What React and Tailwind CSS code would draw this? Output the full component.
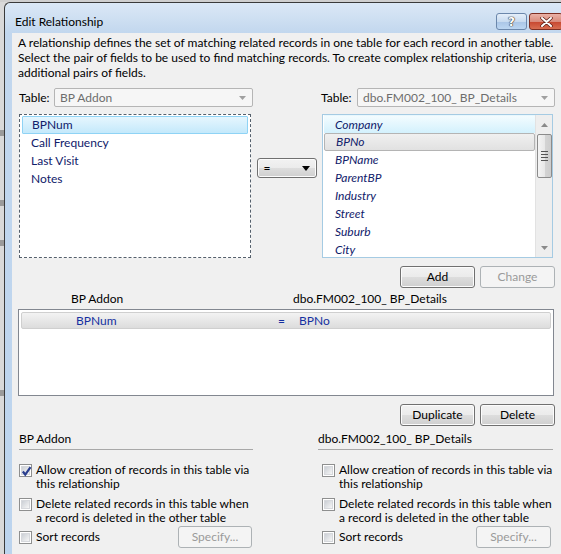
import React from "react";

function Btn({ children, disabled, className = "" }) {
  return (
    <div
      className={
        "flex items-center justify-center rounded-[3px] border text-[12px] " +
        (disabled
          ? "border-[#adb2b5] bg-[#f4f4f4] text-[#9a9a9a] "
          : "border-[#707070] bg-[linear-gradient(to_bottom,#f2f2f2_0%,#ebebeb_50%,#dddddd_51%,#cfcfcf_100%)] text-black shadow-[inset_0_0_0_1px_#fcfcfc] ") +
        className
      }
    >
      {children}
    </div>
  );
}

function Check({ checked }) {
  return (
    <div className="w-[13px] h-[13px] border border-[#8e8f8f] bg-white p-px shrink-0">
      <div className="w-full h-full border border-[#d6d8dc] bg-[linear-gradient(135deg,#cbcfd5_0%,#f6f6f6_100%)] relative">
        {checked && (
          <svg viewBox="0 0 9 9" className="absolute -left-px -top-px w-[11px] h-[11px]">
            <path d="M1.5 4.5 L3.5 7 L7.8 1" fill="none" stroke="#2a3f8f" strokeWidth="1.8" />
          </svg>
        )}
      </div>
    </div>
  );
}

function Combo({ text, className = "" }) {
  return (
    <div
      className={
        "h-[19px] border border-[#b5b5b5] bg-[#f6f6f6] rounded-[2px] flex items-center pl-[5px] pr-[6px] text-[#6d6d6d] " +
        className
      }
    >
      <span className="flex-1 leading-none whitespace-nowrap">{text}</span>
      <svg width="7" height="4" viewBox="0 0 7 4">
        <path d="M0 0 H7 L3.5 4 Z" fill="#a0a0a0" />
      </svg>
    </div>
  );
}

function CheckItem({ checked, lines }) {
  return (
    <div className="flex items-start gap-[4px] leading-[14px]">
      <div className="mt-[1px]">
        <Check checked={checked} />
      </div>
      <div>
        {lines.map((l, i) => (
          <div key={i} className="whitespace-nowrap">{l}</div>
        ))}
      </div>
    </div>
  );
}

function Section({ title, checked, boxOffset = "" }) {
  return (
    <div className="flex flex-col">
      <div className="leading-[15px] whitespace-nowrap">{title}</div>
      <div className="mt-[3px] h-px bg-[#a8a8a8]" />
      <div className={"mt-[13px] flex flex-col gap-[6px] " + boxOffset}>
        <CheckItem checked={checked} lines={["Allow creation of records in this table via", "this relationship"]} />
        <CheckItem lines={["Delete related records in this table when", "a record is deleted in the other table"]} />
      </div>
    </div>
  );
}

export default function App() {
  const leftItems = ["BPNum", "Call Frequency", "Last Visit", "Notes"];
  const rightItems = ["Company", "BPNo", "BPName", "ParentBP", "Industry", "Street", "Suburb", "City"];
  return (
    <div className="w-[561px] h-[554px] overflow-hidden bg-[#d9d9d9] font-['Lato',sans-serif] text-[12px] text-black relative">
      <div className="absolute left-0 top-[130px] w-[4px] h-[6px] bg-[#9a9a9a]" />
      <div className="absolute left-0 top-[200px] w-[4px] h-[6px] bg-[#9a9a9a]" />
      <div className="absolute left-0 top-[240px] w-[4px] h-[6px] bg-[#9a9a9a]" />
      <div className="absolute left-0 top-[390px] w-[4px] h-[6px] bg-[#9a9a9a]" />
      <div className="absolute left-0 top-[0px] w-full h-[2px] bg-[#cfcfcf]" />
      <div className="pl-[4px] pt-[2px] h-full">
        <div className="w-[580px] h-full border-l border-t border-[#3a3a3a] rounded-tl-[6px] bg-[linear-gradient(to_bottom,#dbe8f6_0px,#c2d7ee_30px,#bcd4ee_100%)] flex flex-col">
          <div className="h-[30px] flex items-start shrink-0">
            <div className="pl-[10px] pt-[11px] leading-[15px] text-[12px]">Edit Relationship</div>
            <div className="ml-auto mt-[10px] mr-[21px] flex gap-[2px]">
              <div className="w-[31px] h-[17px] rounded-[3px] border border-[#6b87ab] bg-[linear-gradient(to_bottom,#e4eef9_0%,#c8dbf0_50%,#a9c5e6_51%,#bcd6f2_100%)] flex items-center justify-center">
                <span className="font-['DejaVu_Sans',sans-serif] font-bold text-[12px] leading-none text-white [text-shadow:0_0_1px_#333,0_0_1px_#333,0_0_1px_#333]">?</span>
              </div>
              <div className="w-[34px] h-[17px] rounded-[3px] border border-[#7d2e22] bg-[linear-gradient(to_bottom,#eab1a6_0%,#d98b7c_50%,#c7462f_51%,#d86e52_100%)] flex items-center justify-center">
                <svg width="13" height="10" viewBox="0 0 13 10">
                  <path d="M2 1 L11 9 M11 1 L2 9" stroke="#5a1d14" strokeWidth="3.4" strokeLinecap="round" />
                  <path d="M2 1 L11 9 M11 1 L2 9" stroke="#ffffff" strokeWidth="2" strokeLinecap="round" />
                </svg>
              </div>
            </div>
          </div>
          <div className="flex-1 pl-[7px] flex">
            <div className="flex-1 bg-[#f0f0f0] pl-[7px]">
              <div className="w-[536px] flex flex-col">
                <div className="pt-[2px] -ml-[1px] leading-[15px] text-[12px]">
                  <div className="whitespace-nowrap">A relationship defines the set of matching related records in one table for each record in another table.</div>
                  <div className="whitespace-nowrap">Select the pair of fields to be used to find matching records. To create complex relationship criteria, use</div>
                  <div className="whitespace-nowrap">additional pairs of fields.</div>
                </div>
                <div className="mt-[8px] flex items-center h-[19px]">
                  <span className="w-[35px]">Table:</span>
                  <Combo text="BP Addon" className="w-[199px]" />
                  <span className="ml-[68px] w-[36px]">Table:</span>
                  <Combo text="dbo.FM002_100_ BP_Details" className="w-[198px]" />
                </div>
                <div className="mt-[7px] flex h-[144px]">
                  <div className="w-[232px] h-full border border-dashed border-[#55606c] bg-white px-[2px] pt-[1px] flex flex-col">
                    {leftItems.map((t, i) => (
                      <div
                        key={t}
                        className={
                          "h-[18px] shrink-0 pl-[9px] flex items-center text-[#10206a] " +
                          (i === 0
                            ? "border border-[#8fd3f5] bg-[linear-gradient(to_bottom,#e6f6fe_0%,#c4e9fb_100%)] pl-[8px] rounded-[1px]"
                            : "")
                        }
                      >
                        {t}
                      </div>
                    ))}
                  </div>
                  <div className="w-[71px] flex justify-center pt-[44px]">
                    <Btn className="w-[60px] h-[20px] !justify-between px-[6px]">
                      <span>=</span>
                      <svg width="8" height="5" viewBox="0 0 8 5">
                        <path d="M0 0 H8 L4 5 Z" fill="#000" />
                      </svg>
                    </Btn>
                  </div>
                  <div className="w-[231px] h-full border border-[#a5cbe3] bg-white flex">
                    <div className="flex-1 flex flex-col pl-px">
                      {rightItems.map((t, i) => (
                        <div
                          key={t}
                          className={
                            "h-[18px] shrink-0 pl-[11px] flex items-center italic text-[#10206a] " +
                            (i === 0
                              ? "bg-[linear-gradient(to_bottom,#f3fcff_0%,#d3f1fd_100%)] border-t border-[#e8f8fe]"
                              : i === 1
                              ? "border border-[#b4b4b4] rounded-[2px] bg-[linear-gradient(to_bottom,#f0f0f0_0%,#e1e1e1_100%)] pl-[10px]"
                              : "")
                          }
                        >
                          {t}
                        </div>
                      ))}
                    </div>
                    <div className="w-[17px] bg-[#eeeeee] border-l border-[#e2e2e2] flex flex-col items-center py-[1px]">
                      <div className="h-[17px] flex items-center justify-center">
                        <svg width="7" height="4" viewBox="0 0 7 4">
                          <path d="M0 4 H7 L3.5 0 Z" fill="#8a8a8a" />
                        </svg>
                      </div>
                      <div className="mt-[1px] w-[15px] h-[44px] rounded-[2px] border border-[#8b8b8b] bg-[linear-gradient(to_right,#f4f4f4_0%,#e8e8e8_50%,#d4d4d4_51%,#cdcdcd_100%)] flex flex-col items-center justify-center gap-[2px]">
                        <div className="w-[7px] h-px bg-[#555]" />
                        <div className="w-[7px] h-px bg-[#555]" />
                        <div className="w-[7px] h-px bg-[#555]" />
                        <div className="w-[7px] h-px bg-[#555]" />
                      </div>
                      <div className="mt-auto h-[17px] flex items-center justify-center">
                        <svg width="7" height="4" viewBox="0 0 7 4">
                          <path d="M0 0 H7 L3.5 4 Z" fill="#8a8a8a" />
                        </svg>
                      </div>
                    </div>
                  </div>
                </div>
                <div className="mt-[8px] flex justify-end gap-[5px]">
                  <Btn className="w-[75px] h-[22px]">Add</Btn>
                  <Btn disabled className="w-[75px] h-[22px]">Change</Btn>
                </div>
                <div className="mt-[3px] flex leading-[15px]">
                  <span className="ml-[52px] w-[222px]">BP Addon</span>
                  <span>dbo.FM002_100_ BP_Details</span>
                </div>
                <div className="mt-[3px] -ml-[1px] w-[536px] h-[87px] border border-[#828790] bg-white p-[2px]">
                  <div className="h-[17px] border border-[#cfcfcf] rounded-[2px] bg-[linear-gradient(to_bottom,#f3f3f3_0%,#dcdcdc_100%)] flex items-center text-[#1530a0]">
                    <span className="ml-[54px] w-[202px]">BPNum</span>
                    <span className="w-[21px]">=</span>
                    <span>BPNo</span>
                  </div>
                </div>
                <div className="mt-[8px] flex justify-end gap-[5px]">
                  <Btn className="w-[75px] h-[22px]">Duplicate</Btn>
                  <Btn className="w-[75px] h-[22px]">Delete</Btn>
                </div>
                <div className="mt-[5px] flex">
                  <div className="w-[234px] flex flex-col">
                    <Section title="BP Addon" checked />
                    <div className="mt-[1px] flex items-center h-[22px]">
                      <Check />
                      <span className="ml-[4px]">Sort records</span>
                      <Btn disabled className="ml-auto mr-[1px] w-[74px] h-[22px]">Specify...</Btn>
                    </div>
                  </div>
                  <div className="ml-[65px] w-[235px] flex flex-col">
                    <Section title="dbo.FM002_100_ BP_Details" boxOffset="pl-[4px]" />
                    <div className="mt-[1px] pl-[4px] flex items-center h-[22px]">
                      <Check />
                      <span className="ml-[4px]">Sort records</span>
                      <Btn disabled className="ml-auto mr-[2px] w-[75px] h-[22px]">Specify...</Btn>
                    </div>
                  </div>
                </div>
              </div>
            </div>
          </div>
        </div>
      </div>
    </div>
  );
}
